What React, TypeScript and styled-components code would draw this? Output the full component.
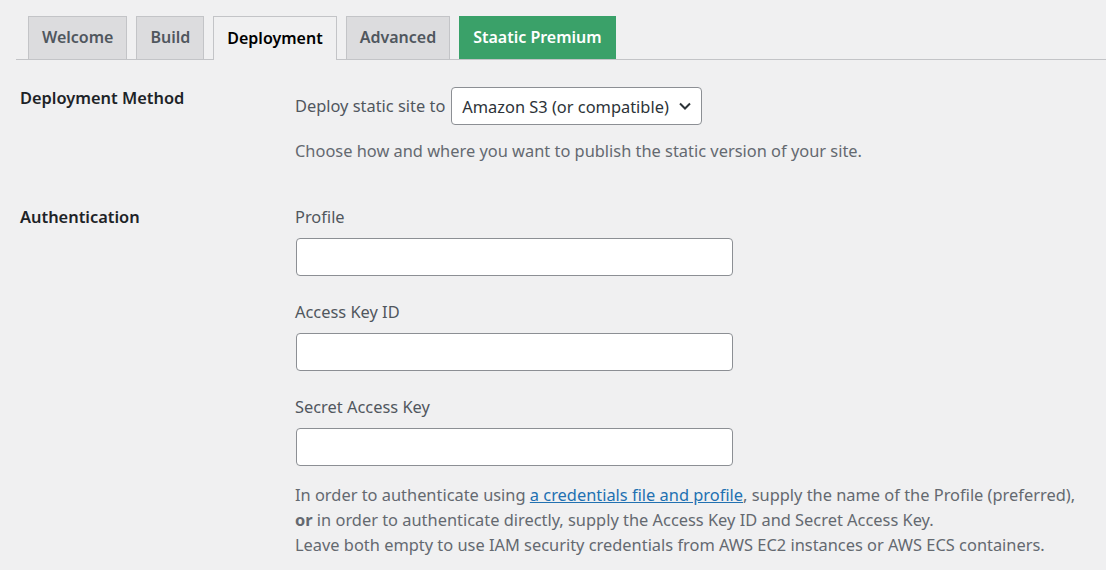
import React from "react";
import styled, { createGlobalStyle } from "styled-components";

const GlobalStyle = createGlobalStyle`
  html, body { margin: 0; padding: 0; background: #f0f0f1; }
  body {
    font-family: "Noto Sans", "Open Sans", "Liberation Sans", sans-serif;
    font-size: 16.4px;
    color: #3c434a;
  }
  * { box-sizing: border-box; }
`;

const Page = styled.div`
  padding-top: 16px;
  width: 1106px;
  height: 570px;
  overflow: hidden;
`;

const TabBar = styled.nav`
  display: flex;
  align-items: flex-end;
  gap: 9px;
  margin-left: 16px;
  padding-left: 12px;
  border-bottom: 1px solid #c3c4c7;
  height: 44px;
`;

const Tab = styled.a<{ $active?: boolean; $premium?: boolean }>`
  display: flex;
  align-items: center;
  padding: 0 13px 2px;
  font-size: 16px;
  font-weight: 600;
  text-decoration: none;
  border: 1px solid ${(p) => (p.$premium ? "#38a169" : "#c3c4c7")};
  border-bottom: none;
  background: ${(p) => (p.$premium ? "#3aa169" : p.$active ? "#f0f0f1" : "#dcdcde")};
  color: ${(p) => (p.$premium ? "#ffffff" : p.$active ? "#000000" : "#50575e")};
  margin-bottom: ${(p) => (p.$active ? "-1px" : "0")};
  height: ${(p) => (p.$active ? "44px" : "43px")};
`;

const Form = styled.div`
  padding-left: 20px;
`;

const Row = styled.section<{ $top: number }>`
  display: grid;
  grid-template-columns: 275px 1fr;
  padding-top: ${(p) => p.$top}px;
`;

const RowLabel = styled.div`
  font-size: 16.4px;
  font-weight: 600;
  line-height: 22px;
  color: #1d2327;
`;

const Field = styled.div`
  display: flex;
  flex-direction: column;
`;

const Inline = styled.div`
  display: flex;
  align-items: center;
  gap: 6px;
  margin-top: -1px;
  color: #50575e;
`;

const SelectBox = styled.div`
  position: relative;
  display: flex;
  align-items: center;
  height: 38px;
  padding: 0 32px 0 10px;
  background: #fff;
  border: 1px solid #8c8f94;
  border-radius: 4px;
  color: #2c3338;
  margin-top: 1px;
`;

const Chevron = styled.svg`
  position: absolute;
  right: 9px;
  top: 50%;
  transform: translateY(-50%);
`;

const Description = styled.p<{ $mt: number }>`
  margin: ${(p) => p.$mt}px 0 0;
  color: #646970;
  line-height: 25px;
`;

const FieldLabel = styled.label<{ $mt: number }>`
  display: block;
  margin-top: ${(p) => p.$mt}px;
  line-height: 22px;
  color: #50575e;
`;

const TextInput = styled.input`
  display: block;
  width: 437px;
  height: 38px;
  margin: 10px 0 0 1px;
  background: #fff;
  border: 1px solid #8c8f94;
  border-radius: 4px;
  font: inherit;
`;

const Link = styled.a`
  color: #2271b1;
  text-decoration: underline;
`;

export default function App() {
  return (
    <>
      <GlobalStyle />
      <Page>
        <TabBar>
          <Tab>Welcome</Tab>
          <Tab>Build</Tab>
          <Tab $active>Deployment</Tab>
          <Tab>Advanced</Tab>
          <Tab $premium>Staatic Premium</Tab>
        </TabBar>
        <Form>
          <Row $top={27}>
            <RowLabel>Deployment Method</RowLabel>
            <Field>
              <Inline>
                <span>Deploy static site to</span>
                <SelectBox>
                  Amazon S3 (or compatible)
                  <Chevron width="14" height="14" viewBox="0 0 14 14">
                    <path d="M2 4.5 L7 9.5 L12 4.5" fill="none" stroke="#2c3338" strokeWidth="2" />
                  </Chevron>
                </SelectBox>
              </Inline>
              <Description $mt={13}>
                Choose how and where you want to publish the static version of your site.
              </Description>
            </Field>
          </Row>
          <Row $top={43}>
            <RowLabel>Authentication</RowLabel>
            <Field>
              <FieldLabel $mt={0}>Profile</FieldLabel>
              <TextInput />
              <FieldLabel $mt={25}>Access Key ID</FieldLabel>
              <TextInput />
              <FieldLabel $mt={25}>Secret Access Key</FieldLabel>
              <TextInput />
              <Description $mt={16}>
                In order to authenticate using <Link href="#">a credentials file and profile</Link>, supply the name of the Profile (preferred),
                <br />
                <strong>or</strong> in order to authenticate directly, supply the Access Key ID and Secret Access Key.
                <br />
                Leave both empty to use IAM security credentials from AWS EC2 instances or AWS ECS containers.
              </Description>
            </Field>
          </Row>
        </Form>
      </Page>
    </>
  );
}
